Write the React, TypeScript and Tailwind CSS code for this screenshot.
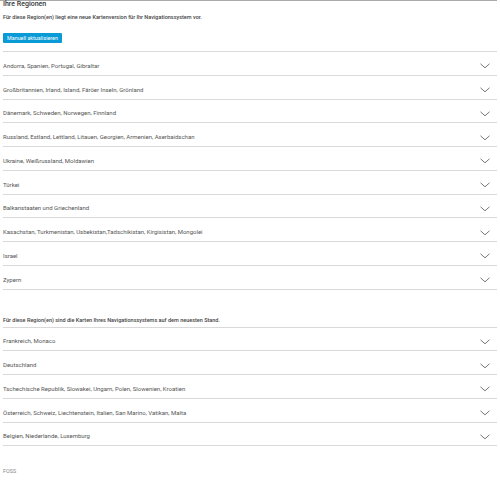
const outdated = [
  "Andorra, Spanien, Portugal, Gibraltar",
  "Großbritannien, Irland, Island, Färöer Inseln, Grönland",
  "Dänemark, Schweden, Norwegen, Finnland",
  "Russland, Estland, Lettland, Litauen, Georgien, Armenien, Aserbaidschan",
  "Ukraine, Weißrussland, Moldawien",
  "Türkei",
  "Balkanstaaten und Griechenland",
  "Kasachstan, Turkmenistan, Usbekistan,Tadschikistan, Kirgisistan, Mongolei",
  "Israel",
  "Zypern",
]

const current = [
  "Frankreich, Monaco",
  "Deutschland",
  "Tschechische Republik, Slowakei, Ungarn, Polen, Slowenien, Kroatien",
  "Österreich, Schweiz, Liechtenstein, Italien, San Marino, Vatikan, Malta",
  "Belgien, Niederlande, Luxemburg",
]

function Chevron() {
  return (
    <svg className="mt-[2px]" width="10" height="6" viewBox="0 0 10 6" fill="none" stroke="#777" strokeWidth="1">
      <path d="M0.5 0.8 L5 4.8 L9.5 0.8" />
    </svg>
  )
}

function RegionList({ items }: { items: string[] }) {
  return (
    <div className="border-t border-[#d9d9d9]">
      {items.map((name) => (
        <div key={name} className="flex h-[23.75px] items-center justify-between border-b border-[#d9d9d9] pt-[4px] pr-[7px]">
          <span className="text-[6px] text-[#555]">{name}</span>
          <Chevron />
        </div>
      ))}
    </div>
  )
}

export default function App() {
  return (
    <div className="h-[480px] w-[500px] overflow-hidden bg-white font-['Roboto',sans-serif]">
      <div className="h-px w-[497px] bg-[#aaa]" />
      <div className="w-[497px] pl-[3px]">
        <h2 className="text-[7px] leading-[6px] font-medium text-[#333]">Ihre Regionen</h2>
        <p className="mt-[6px] text-[5.5px] leading-[8px] font-medium text-[#444]">
          Für diese Region(en) liegt eine neue Kartenversion für Ihr Navigationssystem vor.
        </p>
        <button className="mt-[12px] mb-[8px] block h-[10px] w-[59px] rounded-[1px] bg-[#0a9ad6] text-[5.4px] leading-[10px] text-white">
          Manuell aktualisieren
        </button>
        <RegionList items={outdated} />
        <p className="mt-[26px] mb-[3px] text-[5.5px] leading-[8px] font-medium text-[#444]">
          Für diese Region(en) sind die Karten Ihres Navigationssystems auf dem neuesten Stand.
        </p>
        <RegionList items={current} />
        <p className="mt-[21px] text-[5.4px] text-[#888]">FOSS</p>
      </div>
    </div>
  )
}
